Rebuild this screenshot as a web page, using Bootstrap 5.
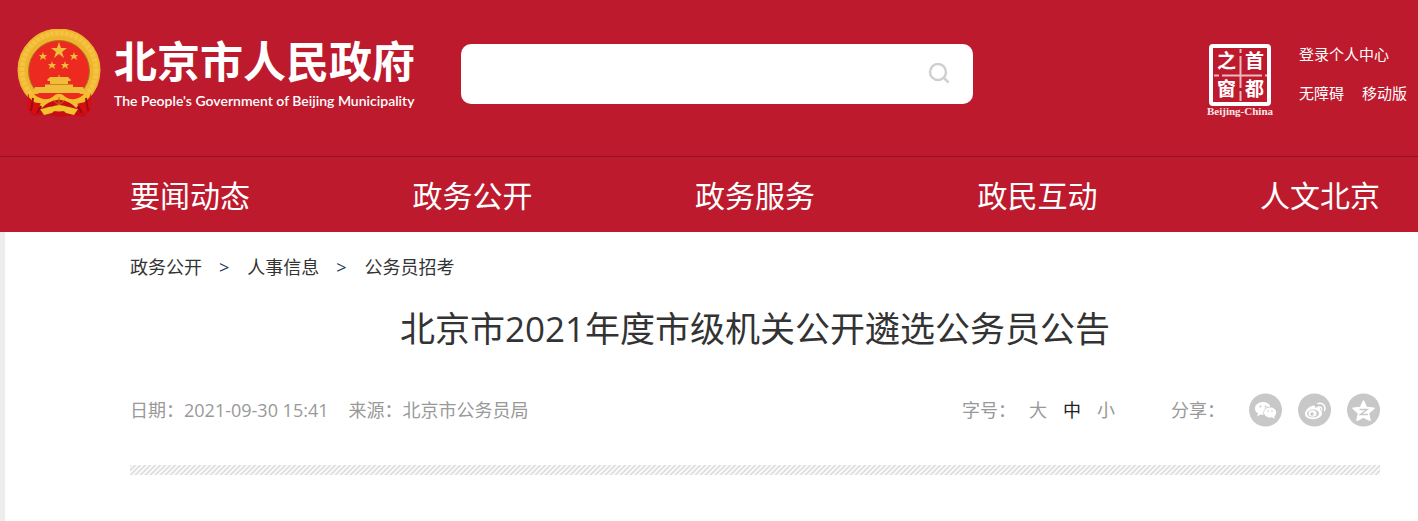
<!DOCTYPE html>
<html lang="zh-CN">
<head>
<meta charset="utf-8">
<meta name="viewport" content="width=device-width, initial-scale=1">
<title>北京市2021年度市级机关公开遴选公务员公告</title>
<link href="https://cdn.jsdelivr.net/npm/bootstrap@5.3.0/dist/css/bootstrap.min.css" rel="stylesheet">
<style>
  body { font-family: "Open Sans", "Noto Sans CJK SC", sans-serif; color: #333; }
  a { color: inherit; text-decoration: none; }
  .site-header { background: #bd1a2d; color: #fff; }
  .masthead { height: 156px; padding: 0 10px 0 16px; }
  .brand-name { font-size: 43px; line-height: 54px; font-weight: 700; }
  .brand-en { font-family: Lato, sans-serif; font-size: 14px; line-height: 24px; font-weight: 600; }
  .site-search { height: 60px; width: 512px; margin-left: 40px; margin-bottom: 8px; border-radius: 10px; }
  .site-search .form-control { border-radius: 10px; font-size: 18px; }
  .search-btn { padding: 6px 23px; }
  .brand-link { width: 405px; }
  .user-links { font-size: 15px; line-height: 20px; width: 109px; margin-left: 24px; margin-bottom: 10px; row-gap: 19px; column-gap: 18px; }
  .main-nav { border-top: 1px solid #8f1422; height: 76px; font-size: 30px; line-height: 40px; padding-top: 2px; }
  .inset { padding-left: 130px; padding-right: 38px; }
  .page-body { border-left: 5px solid #ededed; min-height: calc(100vh - 232px); }
  .page-body .inset { padding-left: 125px; }
  .crumbs { --bs-breadcrumb-divider: '>'; --bs-breadcrumb-item-padding-x: 18px; --bs-breadcrumb-divider-color: #14375c; font-size: 18px; line-height: 24px; padding-top: 23px; }
  .breadcrumb-item + .breadcrumb-item { padding-left: 17px; }
  .article-title { font-size: 35px; line-height: 48px; font-weight: 400; margin-top: 26px; }
  .meta-row { font-size: 18px; line-height: 34px; color: #999; margin-top: 40px; }
  .meta-facts { column-gap: 20px; }
  .size-label { margin-right: 13px; }
  .size-btn { border: 0; background: none; padding: 0; color: inherit; }
  .size-btn.active { color: #222; }
  .hatch { height: 10px; margin-top: 38px; background: linear-gradient(135deg, #dfdfdf 10%, #fafafa 22% 36%, #dfdfdf 50% 60%, #fafafa 72% 86%, #dfdfdf) 0 0 / 5px 5px; }
</style>
</head>
<body>
<header class="site-header">
  <div class="masthead d-flex align-items-center">
    <a href="#" class="brand-link d-flex align-items-center flex-shrink-0 mb-2 text-nowrap">
      <svg class="flex-shrink-0" width="86" height="90" viewBox="0 0 86 90" role="img" aria-label="国徽">
        <path d="M13 62L11 80L18 87L31 85L43 88L57 86L68 88L75 80L74 62Z" fill="#c50d13"/>
        <circle cx="43" cy="41" r="35.500" fill="none" stroke="#efb52f" stroke-width="12"/>
        <circle cx="43" cy="41" r="37" fill="none" stroke="#f5c342" stroke-width="5" stroke-dasharray="4 1"/>
        <circle cx="43" cy="42" r="30.500" fill="#ed2a20" stroke="#a97822"/>
        <g fill="#f0bd3b">
          <path d="M43 13l2 6h6l-5 4 2 6-5-4-5 4 2-6-5-4h6z"/>
          <path id="star" d="M27 23l1 3h3l-2 2 1 3-3-2-3 2 1-3-2-2h3z"/>
          <use href="#star" x="31"/><use href="#star" x="9" y="9"/><use href="#star" x="22" y="9"/>
          <path d="M34 48h18l3 3-1 1h-2v3h-18v-3h-2l-1-1zM29 55h28v3H29zM19 58h48l3 6H16z"/>
          <path d="M43 46v3" stroke="#f7c53b"/>
        </g>
        <path d="M29 55.500h28" stroke="#cf8620"/>
        <path d="M18 65H68L62 71H24Z" fill="#ed2a20"/>
        <path d="M12 64Q14 75 25 74L20 85L14 83L11 79Z M75 64Q73 75 61 74L66 85L72 83L75 79Z" fill="#d80d12"/>
        <path d="M14 66Q28 77 38 70Q43 65 48 70Q59 77 72 66" fill="none" stroke="#f4bd2d" stroke-width="5"/>
        <path d="M29 76Q43 66 57 76L61 80Q43 74 25 80Z" fill="#c50d13"/>
        <path d="M24 80L34 79Q43 73 53 79L62 80L58 86L50 84Q47 80 43 82Q39 80 36 84L28 86Z" fill="#f3c32e"/>
        <path d="M37 71l6 5 6-5M43 68v8" fill="none" stroke="#c77712"/>
        <path d="M17 69L15 82M70 69L72 82M25 77l-4 7M62 77l4 7" stroke="#980c16" stroke-width="2"/>
      </svg>
      <span class="d-flex flex-column ps-2 ms-1">
        <span class="brand-name">北京市人民政府</span>
        <span class="brand-en">The People's Government of Beijing Municipality</span>
      </span>
    </a>
    <form class="site-search position-relative" role="search">
      <input type="search" class="form-control border-0 h-100 pe-5" aria-label="搜索">
      <button type="submit" class="btn search-btn border-0 position-absolute top-50 end-0 translate-middle-y lh-1" aria-label="搜索">
        <svg width="22" height="22" viewBox="0 0 22 22" fill="none" stroke="#d0d0d0" stroke-width="2.500"><circle cx="10" cy="9" r="8"/><path d="M15.500 14.500l5 5"/></svg>
      </button>
    </form>
    <a href="#" class="ms-auto flex-shrink-0" aria-label="首都之窗">
      <svg width="70" height="80" viewBox="0 0 70 80" fill="#fff">
        <rect x="6" y="8" width="58" height="58" rx="2" fill="none" stroke="#fff" stroke-width="4"/>
        <path d="M35.500 11v4M35.500 18v32M35.500 53v10M9 37.500h5M17 37.500h40M60 37.500h3" stroke="#fff" stroke-width="2" opacity=".7"/>
        <g font-family="Noto Sans CJK SC, sans-serif" font-size="19" font-weight="700"><text x="12" y="30">之</text><text x="40" y="30">首</text><text x="12" y="58">窗</text><text x="40" y="58">都</text></g>
        <text x="35" y="77" text-anchor="middle" font-family="Liberation Serif, serif" font-size="11" font-weight="700" opacity=".9">Beijing-China</text>
      </svg>
    </a>
    <nav class="user-links d-flex flex-wrap flex-shrink-0" aria-label="用户">
      <a href="#" class="w-100">登录个人中心</a><a href="#">无障碍</a><a href="#">移动版</a>
    </nav>
  </div>
  <nav class="main-nav inset d-flex justify-content-between align-items-center" aria-label="主导航">
    <a href="#">要闻动态</a><a href="#">政务公开</a><a href="#">政务服务</a><a href="#">政民互动</a><a href="#">人文北京</a>
  </nav>
</header>
<main class="page-body">
  <div class="inset">
    <nav aria-label="面包屑">
      <ol class="breadcrumb crumbs mb-0">
        <li class="breadcrumb-item"><a href="#">政务公开</a></li>
        <li class="breadcrumb-item"><a href="#">人事信息</a></li>
        <li class="breadcrumb-item"><a href="#">公务员招考</a></li>
      </ol>
    </nav>
    <h1 class="article-title text-center mb-0">北京市2021年度市级机关公开遴选公务员公告</h1>
    <div class="meta-row d-flex justify-content-between">
      <div class="meta-facts d-flex"><span>日期：2021-09-30 15:41</span><span>来源：北京市公务员局</span></div>
      <div class="d-flex align-items-center">
        <span class="size-label">字号：</span>
        <div class="d-flex gap-3 me-5 pe-2">
          <button type="button" class="size-btn">大</button><button type="button" class="size-btn active">中</button><button type="button" class="size-btn">小</button>
        </div>
        <span class="me-4">分享：</span>
        <div class="d-flex gap-3">
          <a href="#" class="d-flex" aria-label="微信"><svg width="33" height="34" viewBox="0 0 33 34"><circle cx="16.500" cy="17" r="16.500" fill="#c8c8c8"/><path d="M14 9c-5 0-8 3-8 6.500 0 2 1 4 3 5l-1 3 3.500-2 3 .5c-1-6 3-8.500 7-8.500-1-3-4-4.500-7.500-4.500z" fill="#fff"/><path d="M21 14.500c-4 0-6 2.500-6 5s2.500 5 6 5l2-.3 3 1.500-.8-2.500c1.500-1 2-2.200 2-3.700 0-3-2.500-5-6.200-5z" fill="#fff"/><g fill="#c8c8c8"><circle cx="11.500" cy="13.500" r="1"/><circle cx="16.500" cy="13.500" r="1"/><circle cx="19" cy="18" r=".8"/><circle cx="23" cy="18" r=".8"/></g></svg></a>
          <a href="#" class="d-flex" aria-label="微博"><svg width="33" height="34" viewBox="0 0 33 34"><circle cx="16.500" cy="17" r="16.500" fill="#c8c8c8"/><path d="M14 13c-4 1-7 5-7 8 0 7 17 7 17-1 0-2-1-2-2-3 1-3-2-4-5-2 1-2-1-3-3-2z" fill="#fff"/><ellipse cx="15" cy="20.500" rx="6" ry="4" fill="#c8c8c8"/><ellipse cx="14.500" cy="20.500" rx="4" ry="3.300" fill="#fff"/><circle cx="14" cy="21" r="1.700" fill="#c8c8c8"/><path d="M20 10.500c5-1.500 8 3 6.500 7M20.500 14c2.500-.5 3.500 1 3 3" fill="none" stroke="#fff" stroke-width="1.500" stroke-linecap="round"/></svg></a>
          <a href="#" class="d-flex" aria-label="QQ空间"><svg width="33" height="34" viewBox="0 0 33 34"><circle cx="16.500" cy="17" r="16.500" fill="#c8c8c8"/><path d="M16.500 8l3 6.500 7.500.8-5.500 5 1.500 7-6.500-3.300-6.500 3.300 1.500-7-5.500-5 7.500-.8z" fill="#fff" stroke="#fff" stroke-width="1.500" stroke-linejoin="round"/><path d="M12.500 16.500h7.500l-6.500 5h7.500" fill="none" stroke="#c8c8c8" stroke-width="1.500"/></svg></a>
        </div>
      </div>
    </div>
    <div class="hatch"></div>
  </div>
</main>
<script src="https://cdn.jsdelivr.net/npm/bootstrap@5.3.0/dist/js/bootstrap.bundle.min.js"></script>
</body>
</html>
